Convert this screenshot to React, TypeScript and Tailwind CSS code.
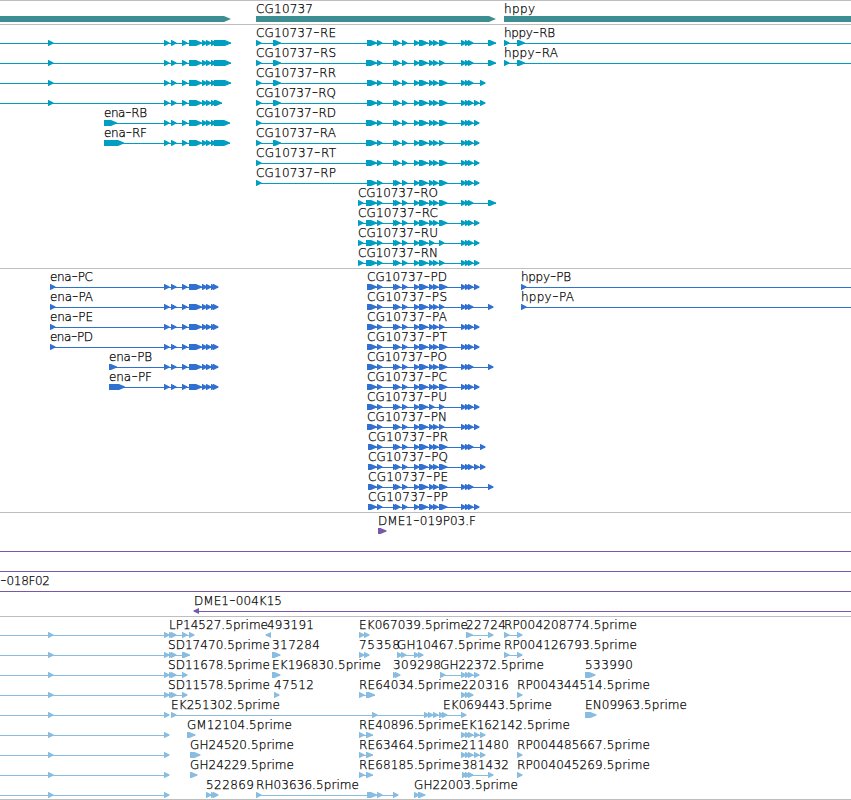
import { Fragment } from 'react';

type Exon = [number, number];
type Label = { x: number; end: number; text: string };
type Feature = { label?: Label; lines?: Exon[]; exons?: Exon[]; back?: Exon[] };
type Row = Feature[];

const arrow = (x: number): Exon => [x, x + 5.5];
const arrows = (...xs: number[]): Exon[] => xs.map(arrow);

function span(exons: Exon[], from?: number): Exon[] {
  const start = from ?? exons[0][0];
  return [[start, Math.floor(exons[exons.length - 1][1])]];
}

const enaMid: Exon[] = [...arrows(164, 171, 182), [189, 202], ...arrows(202, 206, 211)];

function ena(first: Exon, last: Exon, name?: string, from?: number): Row {
  const exons: Exon[] = [first, ...enaMid, last];
  return [{ exons, lines: span(exons, from), label: name ? { x: first[0], end: first[0] + 43, text: name } : undefined }];
}

type Tail = '496' | '493' | '485' | '479' | '479+485';
const tails: Record<Tail, Exon[]> = {
  '496': [[488, 496]],
  '493': arrows(488),
  '485': arrows(480),
  '479': arrows(474),
  '479+485': arrows(474, 480),
};

function cg(name: string, lead: Exon[], start: number, wide: boolean, tail: Tail, short = false): Feature {
  const exons: Exon[] = [
    ...lead,
    [start, 377],
    ...arrows(377, 393, 395, 402, 414),
    [419, 428],
    ...(short ? arrows(429) : arrows(429, 433)),
    wide ? [439, 447.5] : arrow(439),
    ...arrows(461, 465, 468),
    ...tails[tail],
  ];
  const x = exons[0][0];
  return { exons, lines: span(exons), label: { x, end: x + 80, text: name } };
}

function est(x: number, end: number, text: string, exons: Exon[]): Feature {
  return { exons, lines: span(exons), label: { x, end, text } };
}

const two: Exon[] = [arrow(256), [273, 281]];
const one: Exon[] = [arrow(256)];
const late: Exon[] = [arrow(358)];

const hppyR = (text: string): Feature => ({
  exons: [arrow(504), [517, 525]],
  lines: [[504, 851]],
  label: { x: 504, end: text === 'hppy-RA' ? 558 : 555, text },
});
const hppyP = (text: string): Feature => ({
  exons: [arrow(521)],
  lines: [[521, 851]],
  label: { x: 521, end: text === 'hppy-PA' ? 574 : 571, text },
});

const transcripts: Row[] = [
  [...ena(arrow(48), [214, 231], undefined, 0), cg('CG10737-RE', two, 367, true, '496'), hppyR('hppy-RB')],
  [...ena(arrow(48), [214, 231], undefined, 0), cg('CG10737-RS', two, 366, false, '496'), hppyR('hppy-RA')],
  [...ena(arrow(48), [214, 231], undefined, 0), cg('CG10737-RR', two, 367, true, '485')],
  [...ena(arrow(48), [214, 222], undefined, 0), cg('CG10737-RQ', two, 367, true, '479+485')],
  [...ena([104, 117], [214, 230], 'ena-RB'), cg('CG10737-RD', one, 366, true, '479')],
  [...ena([104, 124], [214, 230], 'ena-RF'), cg('CG10737-RA', two, 366, false, '479')],
  [cg('CG10737-RT', one, 366, true, '479')],
  [cg('CG10737-RP', one, 367, true, '479')],
  [cg('CG10737-RO', late, 366, true, '496')],
  [cg('CG10737-RC', late, 366, true, '479')],
  [cg('CG10737-RU', late, 366, false, '479', true)],
  [cg('CG10737-RN', late, 366, false, '479')],
];

const proteins: Row[] = [
  [...ena(arrow(50), arrow(213), 'ena-PC'), cg('CG10737-PD', [], 367, true, '479'), hppyP('hppy-PB')],
  [...ena(arrow(50), arrow(213), 'ena-PA'), cg('CG10737-PS', [], 367, false, '493'), hppyP('hppy-PA')],
  [...ena(arrow(50), arrow(213), 'ena-PE'), cg('CG10737-PA', [], 367, false, '479')],
  [...ena(arrow(50), arrow(213), 'ena-PD'), cg('CG10737-PT', [], 367, true, '479')],
  [...ena([109, 117], arrow(213), 'ena-PB'), cg('CG10737-PO', [], 367, true, '493')],
  [...ena([109, 125], arrow(213), 'ena-PF'), cg('CG10737-PC', [], 367, true, '479')],
  [cg('CG10737-PU', [], 367, false, '479', true)],
  [cg('CG10737-PN', [], 367, false, '479')],
  [cg('CG10737-PR', [], 368, true, '485')],
  [cg('CG10737-PQ', [], 368, true, '479+485')],
  [cg('CG10737-PE', [], 368, true, '493')],
  [cg('CG10737-PP', [], 368, true, '479')],
];

const clones: Row[] = [
  [{ exons: [[378, 386.5]], label: { x: 378, end: 476, text: 'DME1-019P03.F' } }],
  [{ lines: [[0, 851]] }],
  [{ lines: [[0, 851]] }],
  [{ lines: [[0, 851]], label: { x: 0, end: 50, text: '-018F02' } }],
  [{ lines: [[194, 851]], back: [[193.5, 199]], label: { x: 194, end: 282, text: 'DME1-004K15' } }],
];

const lead: Feature = { exons: arrows(48, 164), lines: [[0, 169]] };

const ests: Row[] = [
  [
    lead,
    est(169, 268, 'LP14527.5prime', arrows(169, 171, 182, 189)),
    { back: [[265.5, 271]], label: { x: 267, end: 314, text: '493191' } },
    est(359, 468, 'EK067039.5prime', arrows(359, 364)),
    est(466, 506, '22724', [[466, 473], arrow(488)]),
    est(504, 637, 'RP004208774.5prime', arrows(504, 517)),
  ],
  [
    lead,
    est(168, 270, 'SD17470.5prime', [...arrows(169, 171), [182, 190]]),
    est(272, 320, '317284', [[272, 280.5]]),
    est(359, 400, '75358', arrows(359, 364)),
    est(397, 501, 'GH10467.5prime', arrows(397, 401, 414, 418)),
    est(504, 637, 'RP004126793.5prime', arrows(504, 517)),
  ],
  [
    lead,
    est(168, 270, 'SD11678.5prime', arrows(169, 171, 182)),
    est(272, 381, 'EK196830.5prime', [[272, 280.5]]),
    est(393, 441, '309298', arrows(393, 395)),
    est(440, 544, 'GH22372.5prime', arrows(440, 461, 465, 468, 474)),
    est(585, 633, '533990', [[585, 595.5]]),
  ],
  [
    lead,
    est(168, 270, 'SD11578.5prime', arrows(169, 171, 182)),
    est(274, 314, '47512', arrows(274)),
    est(359, 461, 'RE64034.5prime', [arrow(359), [366, 375]]),
    est(461, 509, '220316', arrows(461, 465, 468)),
    est(517, 650, 'RP004344514.5prime', arrows(517)),
  ],
  [
    lead,
    est(171, 280, 'EK251302.5prime', arrows(171, 372, 424, 428, 433, 439)),
    est(443, 552, 'EK069443.5prime', arrows(442, 461)),
    est(585, 687, 'EN09963.5prime', [[585, 596.5]]),
  ],
  [
    lead,
    est(187, 292, 'GM12104.5prime', [[187, 195.5]]),
    est(359, 461, 'RE40896.5prime', [arrow(359), [366, 373]]),
    est(461, 570, 'EK162142.5prime', arrows(461, 465, 468, 474, 480)),
  ],
  [
    lead,
    est(190, 294, 'GH24520.5prime', [[190, 200.5]]),
    est(359, 461, 'RE63464.5prime', [arrow(359), [366, 373]]),
    est(461, 509, '211480', arrows(461, 465, 468, 474, 480)),
    est(517, 650, 'RP004485667.5prime', arrows(517)),
  ],
  [
    lead,
    est(190, 294, 'GH24229.5prime', [[190, 197.5]]),
    est(359, 461, 'RE68185.5prime', [arrow(359), [366, 373]]),
    est(462, 509, '381432', arrows(462, 465, 468, 488)),
    est(517, 650, 'RP004045269.5prime', arrows(517)),
  ],
  [
    lead,
    est(206, 254, '522869', arrows(206, 211, 213)),
    est(256, 359, 'RH03636.5prime', [arrow(256), [367, 377], ...arrows(377, 393)]),
    est(414, 518, 'GH22003.5prime', [arrow(414), [418, 425.5]]),
  ],
];

function exonPoints([a, b]: Exon, y: number) {
  const neck = Math.max(a + 0.5, b - 6);
  return `${a},${y - 3} ${neck},${y - 3} ${b},${y - 0.5} ${b},${y + 0.5} ${neck},${y + 3} ${a},${y + 3}`;
}

function LabelText({ label, y }: { label: Label; y: number }) {
  const [head, tail] = label.text.split('-');
  return (
    <text
      x={label.x}
      y={y}
      textLength={label.end - label.x}
      lengthAdjust="spacing"
      className="fill-black stroke-black text-[12px] font-extralight [stroke-width:0.25px] [font-family:'DejaVu_Sans_Light','DejaVu_Sans',sans-serif]"
    >
      {tail === undefined ? (
        head
      ) : (
        <Fragment>
          {head}
          <tspan dy={1.3} className="text-[19px] [stroke-width:0px]">-</tspan>
          <tspan dy={-1.3}>{tail}</tspan>
        </Fragment>
      )}
    </text>
  );
}

function Track({ rows, first, height, color }: { rows: Row[]; first: number; height: number; color: string }) {
  return (
    <section className="shrink-0 border-t border-[#bebebe]">
      <svg width={851} height={height - 1} className={'block overflow-visible ' + color}>
        {rows.map((row, i) => {
          const y = first + i * 20;
          return (
            <g key={i}>
              <g fill="currentColor">
                {row.map((f, j) => (
                  <g key={j}>
                    {f.lines?.map(([a, b], k) => <rect key={k} x={a} y={y} width={b - a} height={1} />)}
                    {f.exons?.map((e, k) => <polygon key={k} points={exonPoints(e, y)} />)}
                    {f.back?.map(([a, b], k) => (
                      <polygon key={k} points={`${b},${y - 3} ${a},${y - 0.5} ${a},${y + 0.5} ${b},${y + 3}`} />
                    ))}
                  </g>
                ))}
              </g>
              {row.map((f, j) => f.label && <LabelText key={j} label={f.label} y={y - 6} />)}
            </g>
          );
        })}
      </svg>
    </section>
  );
}

function GeneTrack() {
  return (
    <section className="shrink-0 border-t border-[#bebebe]">
      <svg width={851} height={23} className="block text-[#3d8e93]">
        <g fill="currentColor">
          <polygon points="0,15 224,15 231,18 224,21 0,21" />
          <polygon points="256,15 489,15 496,18 489,21 256,21" />
          <rect x={504} y={15} width={347} height={6} />
        </g>
        <LabelText label={{ x: 256, end: 313, text: 'CG10737' }} y={12} />
        <LabelText label={{ x: 504, end: 535, text: 'hppy' }} y={12} />
      </svg>
    </section>
  );
}

export default function App() {
  return (
    <main className="flex h-[800px] w-[851px] flex-col overflow-hidden bg-white">
      <GeneTrack />
      <Track rows={transcripts} first={18} height={244} color="text-[#009ec0]" />
      <Track rows={proteins} first={18} height={244} color="text-[#3070d0]" />
      <Track rows={clones} first={18} height={104} color="text-[#7858a8]" />
      <Track rows={ests} first={18} height={183} color="text-[#88bce0]" />
      <div className="h-px shrink-0 bg-[#bebebe]" />
    </main>
  );
}
